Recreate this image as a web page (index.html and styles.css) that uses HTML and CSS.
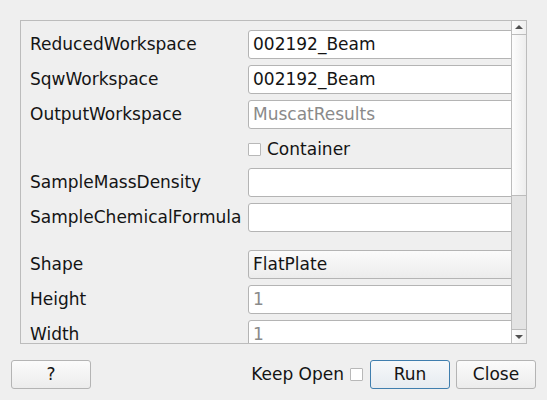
FILE: index.html
```html
<!DOCTYPE html>
<html>
<head>
<meta charset="utf-8">
<link rel="stylesheet" href="styles.css">
</head>
<body>
<div class="dialog">
  <div class="frame">
    <div class="viewport">
      <div class="form">
        <div class="label">ReducedWorkspace</div>
        <div class="field"><span class="value">002192_Beam</span></div>
        <div class="label">SqwWorkspace</div>
        <div class="field"><span class="value">002192_Beam</span></div>
        <div class="label">OutputWorkspace</div>
        <div class="field"><span class="placeholder">MuscatResults</span></div>
        <div class="label"></div>
        <div class="check-row"><span class="checkbox"></span><span>Container</span></div>
        <div class="label">SampleMassDensity</div>
        <div class="field"></div>
        <div class="label">SampleChemicalFormula</div>
        <div class="field"></div>
        <div class="spacer"></div>
        <div class="spacer"></div>
        <div class="label">Shape</div>
        <div class="field combo"><span class="value">FlatPlate</span></div>
        <div class="label">Height</div>
        <div class="field"><span class="placeholder">1</span></div>
        <div class="label">Width</div>
        <div class="field"><span class="placeholder">1</span></div>
      </div>
    </div>
    <div class="scrollbar">
      <div class="sb-btn"><span class="arrow-up"></span></div>
      <div class="sb-thumb"></div>
      <div class="sb-groove"></div>
      <div class="sb-btn bottom"><span class="arrow-down"></span></div>
    </div>
  </div>
  <div class="footer">
    <button class="btn help">?</button>
    <div class="footer-right">
      <span class="keep">Keep Open</span>
      <span class="checkbox keep-box"></span>
      <button class="btn run">Run</button>
      <button class="btn">Close</button>
    </div>
  </div>
</div>
</body>
</html>
```

FILE: styles.css
```css
html, body {
  margin: 0;
  padding: 0;
}
body {
  width: 547px;
  height: 400px;
  background: #efefef;
  font-family: "DejaVu Sans", sans-serif;
  font-size: 17px;
  color: #141414;
  overflow: hidden;
}
.dialog {
  padding: 20px 0 0 0;
}
.frame {
  margin-left: 20px;
  width: 507px;
  height: 324px;
  box-sizing: border-box;
  border: 1px solid #bcbcbc;
  display: flex;
}
.viewport {
  width: 491px;
  overflow: hidden;
  padding: 9px 0 0 9px;
  box-sizing: border-box;
}
.form {
  display: grid;
  grid-template-columns: 218px 290px;
  row-gap: 6px;
}
.label {
  display: flex;
  align-items: center;
  height: 29px;
  box-sizing: border-box;
  padding-bottom: 2px;
  white-space: nowrap;
}
.field {
  height: 29px;
  box-sizing: border-box;
  border: 1px solid #b4b4b4;
  border-radius: 3px;
  background: #ffffff;
  display: flex;
  align-items: center;
  padding: 0 0 1px 4px;
  white-space: nowrap;
}
.combo {
  background: linear-gradient(#fbfbfb, #ececec);
}
.placeholder {
  color: #8a8a8a;
}
.check-row {
  height: 27px;
  display: flex;
  align-items: center;
  gap: 6px;
}
.label:has(+ .check-row) {
  height: 27px;
}
.checkbox {
  display: inline-block;
  width: 13px;
  height: 13px;
  box-sizing: border-box;
  border: 1px solid #b8b8b8;
  background: #ffffff;
  border-radius: 1px;
}
.check-row .checkbox {
  margin-top: 1px;
}
.spacer {
  height: 6px;
}
.scrollbar {
  width: 14px;
  border-left: 1px solid #bcbcbc;
  display: flex;
  flex-direction: column;
}
.sb-btn {
  height: 13px;
  border-bottom: 1px solid #bcbcbc;
  background: linear-gradient(to right, #fcfcfc, #efefef);
  display: flex;
  justify-content: center;
  align-items: center;
}
.sb-btn.bottom {
  border-bottom: none;
  border-top: 1px solid #bcbcbc;
}
.arrow-up {
  width: 0;
  height: 0;
  border-left: 4px solid transparent;
  border-right: 4px solid transparent;
  border-bottom: 4px solid #505050;
  margin-top: -2px;
}
.arrow-down {
  width: 0;
  height: 0;
  border-left: 4px solid transparent;
  border-right: 4px solid transparent;
  border-top: 4px solid #505050;
}
.sb-thumb {
  height: 160px;
  border-bottom: 1px solid #bcbcbc;
  background: linear-gradient(to right, #fdfdfd, #ededed);
}
.sb-groove {
  flex: 1;
  background: #e3e3e3;
}
.footer {
  display: flex;
  justify-content: space-between;
  align-items: center;
  padding: 16px 11px 0 11px;
}
.footer-right {
  display: flex;
  align-items: center;
}
.btn {
  width: 80px;
  height: 29px;
  box-sizing: border-box;
  border: 1px solid #b4b4b4;
  border-radius: 3px;
  background: linear-gradient(#fbfbfb, #ececec);
  font-family: "DejaVu Sans", sans-serif;
  font-size: 17px;
  color: #141414;
  padding: 0 0 1px 0;
}
.keep {
  margin-right: 6px;
  padding-bottom: 1px;
}
.keep-box {
  margin-right: 7px;
}
.run {
  border-color: #3f7eae;
  background: linear-gradient(#f6f8fa, #e6ebf0);
  margin-right: 6px;
}
```
